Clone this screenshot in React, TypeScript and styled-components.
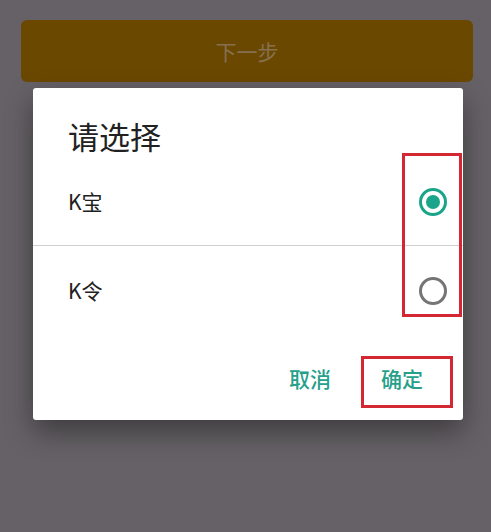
import React, { useState } from "react";
import styled, { createGlobalStyle } from "styled-components";

const GlobalStyle = createGlobalStyle`
  html, body {
    margin: 0;
    padding: 0;
    background: #656166;
    font-family: "Noto Sans CJK SC", "Noto Sans", sans-serif;
  }
`;

const Page = styled.div`
  width: 491px;
  height: 532px;
  padding: 20px 18px 0 21px;
  box-sizing: border-box;
  overflow: hidden;
`;

const NextButton = styled.div`
  height: 62px;
  border-radius: 6px;
  background: #6b4800;
  color: #86704f;
  font-size: 21px;
  display: flex;
  align-items: center;
  justify-content: center;
`;

const Dialog = styled.div`
  position: relative;
  margin: 6px 10px 0 12px;
  background: #fff;
  border-radius: 3px;
  box-shadow: 0 12px 28px rgba(0, 0, 0, 0.38);
`;

const Title = styled.div`
  padding: 30px 0 3px 35px;
  font-size: 31px;
  line-height: 36px;
  color: #212121;
`;

const Row = styled.div`
  height: 88px;
  display: flex;
  align-items: center;
  justify-content: space-between;
  padding: 0 16px 0 35px;
  cursor: pointer;
`;

const Divider = styled.div`
  height: 1px;
  background: #cfcfcf;
`;

const Label = styled.span`
  font-size: 21px;
  color: #212121;
`;

const Radio = styled.span<{ $checked: boolean }>`
  width: 28px;
  height: 28px;
  margin-top: 2px;
  box-sizing: border-box;
  border-radius: 50%;
  border: 3px solid ${({ $checked }) => ($checked ? "#1aa58a" : "#757575")};
  display: flex;
  align-items: center;
  justify-content: center;
  &::after {
    content: "";
    display: ${({ $checked }) => ($checked ? "block" : "none")};
    width: 14px;
    height: 14px;
    border-radius: 50%;
    background: #1aa58a;
  }
`;

const Highlight = styled.div`
  position: absolute;
  left: 369px;
  top: 65px;
  width: 60px;
  height: 164px;
  box-sizing: border-box;
  border: 3px solid #d32834;
  pointer-events: none;
`;

const Actions = styled.div`
  display: flex;
  justify-content: flex-end;
  padding: 22px 10px 12px 0;
`;

const ActionButton = styled.button<{ $marked?: boolean }>`
  height: 52px;
  box-sizing: border-box;
  border: 3px solid ${({ $marked }) => ($marked ? "#d32834" : "transparent")};
  background: none;
  padding: 6px 27px 0 17px;
  display: flex;
  align-items: flex-start;
  font-family: inherit;
  font-size: 21px;
  line-height: 26px;
  font-weight: 500;
  color: #26a08a;
  cursor: pointer;
`;

const options = ["K宝", "K令"];

export default function App() {
  const [selected, setSelected] = useState(0);

  return (
    <>
      <GlobalStyle />
      <Page>
        <NextButton>下一步</NextButton>
        <Dialog>
          <Title>请选择</Title>
          {options.map((opt, i) => (
            <React.Fragment key={opt}>
              {i > 0 && <Divider />}
              <Row onClick={() => setSelected(i)}>
                <Label>{opt}</Label>
                <Radio $checked={selected === i} />
              </Row>
            </React.Fragment>
          ))}
          <Highlight />
          <Actions>
            <ActionButton>取消</ActionButton>
            <ActionButton $marked>确定</ActionButton>
          </Actions>
        </Dialog>
      </Page>
    </>
  );
}
